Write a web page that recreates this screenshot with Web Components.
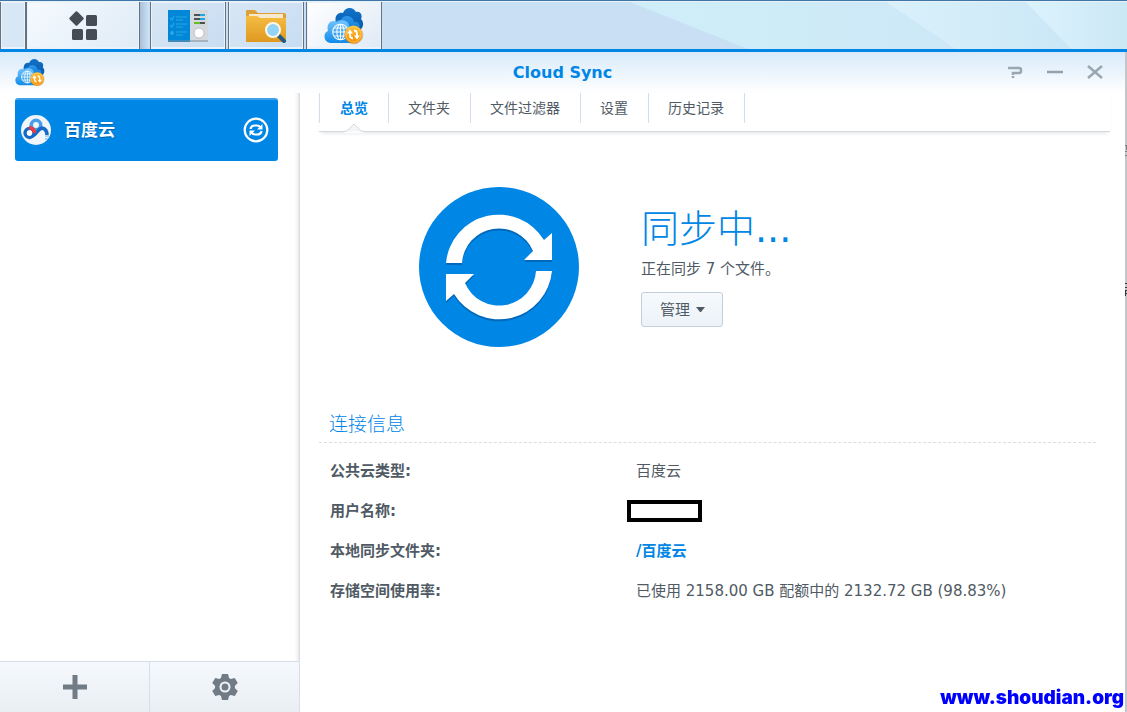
<!DOCTYPE html>
<html lang="zh-CN">
<head>
<meta charset="utf-8">
<title>Cloud Sync</title>
<style>
  html { height: 100%; }
  body {
    margin: 0; min-height: 100%; display: flex; flex-direction: column;
    font: 15px/20px "DejaVu Sans", "Noto Sans CJK SC", sans-serif;
    color: #505a64; background: #fff;
  }
  sync-window { flex: 1; }
</style>
</head>
<body>
<task-bar></task-bar>
<sync-window heading="Cloud Sync">
  <account-list slot="side"></account-list>
  <tab-strip></tab-strip>
  <sync-status></sync-status>
  <connection-info></connection-info>
</sync-window>
<site-mark>www.shoudian.org</site-mark>

<script>
const define = (name, html, setup) => {
  const template = document.createElement('template');
  template.innerHTML = html;
  customElements.define(name, class extends HTMLElement {
    constructor() {
      super();
      this.attachShadow({ mode: 'open' }).append(template.content.cloneNode(true));
    }
    connectedCallback() { if (setup) setup(this, this.shadowRoot); }
  });
};

const ARROW = 'M27 76A53 53 0 0 1 125 53L133 46V73H105L114 64A37 37 0 0 0 43 76Z';
const ARROWS = `<path d="${ARROW}"/><path d="${ARROW}" transform="rotate(180 80 80)"/>`;

define('cloud-icon', `
<style>:host{display:block;width:40px;height:38px} svg{display:block;width:100%;height:100%}</style>
<svg viewBox="0 0 40 38" aria-hidden="true">
  <defs>
    <linearGradient id="b" x2="0" y2="1"><stop stop-color="#1273c8"/><stop offset="1" stop-color="#0453a4"/></linearGradient>
    <linearGradient id="m" x2="0" y2="1"><stop stop-color="#2d94e9"/><stop offset="1" stop-color="#0872cf"/></linearGradient>
    <linearGradient id="f" x2="0" y2="1"><stop stop-color="#72c4ff"/><stop offset="1" stop-color="#128be7"/></linearGradient>
    <linearGradient id="o" x2="0" y2="1"><stop stop-color="#ffc13a"/><stop offset="1" stop-color="#f78b00"/></linearGradient>
  </defs>
  <path fill="url(#b)" d="M12 16C10 9 14 5 19 6C21 0 29-1 32 5C36 4 39 8 37 12C40 15 40 20 36 23L30 28H16Z"/>
  <path fill="url(#m)" d="M9 22C9 15 13 12 17 13C19 7 29 8 30 15C35 14 37 19 35 22L31 31H13Z"/>
  <path fill="url(#f)" d="M6 36C-1 35-1 25 4 24C2 17 7 12 13 15C18 11 26 14 25 20C29 19 33 23 31 27C34 31 31 36 27 36Z"/>
  <g fill="none" stroke="#f4fbff" stroke-width="1.1"><circle cx="16.500" cy="25" r="7.800"/><ellipse cx="16.500" cy="25" rx="3.600" ry="7.800"/><path d="M16.500 17V33M9 25H24M10 21H23M10 29H23"/></g>
  <circle cx="30" cy="28" r="9.300" fill="#9b640a" opacity=".35"/>
  <circle cx="29.500" cy="27.500" r="9" fill="url(#o)"/><circle cx="29.500" cy="27.500" r="7.500" fill="none" stroke="#ffd469" stroke-width=".7"/>
  <path fill="none" stroke="#fff" stroke-width="1.800" d="M29 31.500Q26 31.500 26 28V25M30 23.500Q33 23.500 33 27V30"/><path fill="#fff" d="M23 26.500L26 22.500L29 26.500ZM30 28.500L33 32.500L36 28.500Z"/>
</svg>`);

define('task-button', `
<style>
  :host{display:block;width:76px;flex:none}
  :host([narrow]){width:26px}:host([wide]){width:114px}
  button{display:flex;align-items:center;justify-content:center;width:100%;height:100%;padding:0;background:linear-gradient(135deg,#d8e6f4,#c8ddf2);border:0 solid #66727f;border-width:0 1px;box-shadow:inset 0 0 0 1px #eaf3fb,inset 0 -1px 0 1px #eaf3fb;border-radius:0}
  :host([narrow]) button{background:#d7e7f5}
  :host([wide]) button{background:linear-gradient(135deg,#f5faff,#dfebf6)}
  :host([active]) button{background:linear-gradient(135deg,#fff,#dfeaf6)}
</style>
<button type="button"><slot></slot></button>`, (host, root) => {
  root.querySelector('button').setAttribute('aria-label', host.getAttribute('label'));
});

define('task-bar', `
<style>
  :host{display:block;position:relative;height:47px;padding-top:2px;background:#c9dff4;border-bottom:3px solid #0086e5}
  .sky{position:absolute;inset:0;width:100%;height:100%}
  nav{position:relative;display:flex;height:47px;gap:2px}
  .group{display:flex;padding-right:8px;background:linear-gradient(to left,#c9dff4,#a9bfd6 8px)}
  .icon{display:block}
</style>
<svg class="sky" viewBox="0 0 1127 49" preserveAspectRatio="none" aria-hidden="true">
  <defs>
    <linearGradient id="s1"><stop stop-color="#cfeefa"/><stop offset="1" stop-color="#cce4f4"/></linearGradient>
    <linearGradient id="s2"><stop stop-color="#daf1fb"/><stop offset="1" stop-color="#c6e4f5"/></linearGradient>
    <linearGradient id="s3"><stop stop-color="#dcf3fd"/><stop offset="1" stop-color="#cbe8f5"/></linearGradient>
  </defs>
  <path fill="#c9dff4" d="M0 0H1127V49H0Z"/>
  <path fill="url(#s1)" d="M625 0H1127V49H748Z"/><path fill="url(#s2)" d="M883 0H1127V49H956Z"/><path fill="url(#s3)" d="M1024 0H1127V49H1071Z"/>
  <path fill="#3f76a5" d="M0 0H1127V1H0Z"/><path fill="#e6f2fa" d="M0 1H1127V2H0Z"/>
</svg>
<nav aria-label="任务栏">
  <div class="group">
    <task-button narrow label="显示桌面"></task-button>
    <task-button wide label="主菜单">
      <svg class="icon" width="30" height="30" viewBox="0 0 30 30" fill="#454c56"><rect x="3" y="2" width="11" height="11" rx="1.500" transform="rotate(45 8.500 7.500)"/><rect x="18" y="4" width="11" height="11" rx="1.500"/><rect x="4" y="18" width="11" height="11" rx="1.500"/><rect x="18" y="18" width="11" height="11" rx="1.500"/></svg>
    </task-button>
  </div>
  <task-button label="控制面板">
    <svg class="icon" width="42" height="34" viewBox="0 0 42 34"><path fill="#0087d8" d="M1 1H23V33H1Z"/><path fill="#d3d8dd" d="M23 1H41V33H23Z"/><path d="M1 32H41" stroke="#7b8da0"/><path fill="none" stroke="#2ba6e6" stroke-width="1.200" d="M3 9L5 11L7 7M9 8H20M9 11H16M3 16L5 18L7 14M9 15H20M9 18H16M9 23H20M9 26H16"/><circle cx="5" cy="24" r="2" fill="#2ba6e6"/><path stroke="#4a5057" stroke-width="2" d="M27 6H38M27 10H38M27 14H38"/><path stroke="#19a8e8" stroke-width="2" d="M33 6H38M33 10H38"/><path stroke="#69bd22" stroke-width="2" d="M27 14H33"/><circle cx="32" cy="24" r="5" fill="#fff" stroke="#b9c0c8"/></svg>
  </task-button>
  <task-button label="文件管理">
    <svg class="icon" width="42" height="34" viewBox="0 0 42 34"><defs><linearGradient id="g" x2="0" y2="1"><stop stop-color="#f5bd43"/><stop offset="1" stop-color="#df9820"/></linearGradient></defs><path fill="#dca037" d="M1 2Q1 1 2 1H10L13 4H39Q41 4 41 6V12H1Z"/><path fill="#f7e9cc" d="M4 5H38V11H4Z"/><path fill="url(#g)" d="M1 7H12L15 9H41V31Q41 33 39 33H1Z"/><path stroke="#215a82" stroke-width="4" stroke-linecap="round" d="M33 26L39 32"/><circle cx="28" cy="21" r="7" fill="#91d4f8" stroke="#fff7e5" stroke-width="2"/></svg>
  </task-button>
  <task-button active label="Cloud Sync"><cloud-icon></cloud-icon></task-button>
</nav>`);

define('sync-window', `
<style>
  :host{display:flex;flex-direction:column;position:relative;border-right:2px solid #c3c7ca;background:#fff}
  .behind{position:absolute;left:100%;top:0}
  header{display:grid;grid-template-columns:1fr auto 1fr;align-items:center;height:41px;padding:0 20px;background:linear-gradient(#d8eafa,#fff)}
  cloud-icon{width:30px;height:29px;margin-left:-5px}
  h1{margin:0;font-size:16px;line-height:20px;color:#0086e5}
  .tools{display:flex;justify-content:flex-end;gap:20px}
  .tools button{width:20px;height:20px;padding:0;border:0;background:none}
  svg{display:block}
  .body{flex:1;display:grid;grid-template-columns:300px minmax(0,1fr)}
  main{padding:0 15px 0 19px}
</style>
<header>
  <cloud-icon></cloud-icon><h1></h1>
  <div class="tools">
    <button type="button" aria-label="帮助"><svg width="20" height="20" fill="none" stroke="#9aa6b0" stroke-width="2"><path d="M3 5H14Q16 5 16 7V8Q16 10 14 10H8V12M8 13V15" stroke-width="2.500"/></svg></button>
    <button type="button" aria-label="最小化"><svg width="20" height="20"><path d="M2 9H18" stroke="#95a1ac" stroke-width="2.500"/></svg></button>
    <button type="button" aria-label="关闭"><svg width="20" height="20"><path d="M3 3L17 15M17 3L3 15" stroke="#9aa6b0" stroke-width="2.500"/></svg></button>
  </div>
</header>
<div class="body"><slot name="side"></slot><main><slot></slot></main></div>
<svg class="behind" width="2" height="250" aria-hidden="true"><path stroke="#7d8185" fill="none" d="M0 93.500H2M1.500 93V98M0 99.500H2M0 103.500H2"/><path stroke="#34383c" fill="none" d="M0 231.500H2M0 235.500H2M0 238.500H2M.5 238V244M0 241.500H2"/></svg>`, (host, root) => {
  root.querySelector('h1').textContent = host.getAttribute('heading');
});

define('account-list', `
<style>
  :host{display:flex;flex-direction:column;justify-content:space-between;box-sizing:border-box;border-right:1px solid #d9dde1;box-shadow:inset -4px 0 4px -3px #dcdfe2}
  .item{display:flex;align-items:center;margin:5px 21px 0 15px;height:63px;padding:0 9px 2px 6px;border:0;border-top:2px solid #3da1ec;border-radius:3px;background:#0086e5;color:#fff;font:bold 17px/24px "DejaVu Sans","Noto Sans CJK SC",sans-serif;text-align:left;text-shadow:0 1px 1px #0060b0}
  .item span{flex:1;margin-left:13px}
  footer{display:flex;height:50px;border-top:1px solid #d5dfec}
  footer button{flex:1;display:flex;align-items:center;justify-content:center;padding:0;border:0;background:linear-gradient(#f5f9fd,#e9eef3)}
  footer button+button{border-left:1px solid #d5dfec}
</style>
<button class="item" type="button">
  <svg width="30" height="30" viewBox="0 0 30 30" aria-hidden="true"><circle cx="15" cy="15" r="15" fill="#eff5fb"/><g fill="none" stroke-width="3.500"><circle cx="15" cy="10" r="4.700" stroke="#4a9ee8"/><path stroke="#1469c7" d="M11 21Q14 20 16 17T21 13Q26 14 26 20"/><circle cx="8.500" cy="18" r="4.400" stroke="#1469c7"/><path stroke="#ee3b43" d="M8 12.500Q13 13 13.500 18"/></g><circle cx="8.500" cy="18" r="2.700" fill="#fff"/><path d="M24 21H28M24 24H27" stroke="#6cacf0"/></svg>
  <span>百度云</span>
  <svg width="26" height="26" viewBox="0 0 26 26" aria-hidden="true"><circle cx="13" cy="13" r="11.300" fill="none" stroke="#fff" stroke-width="2.200"/><g fill="none" stroke="#fff" stroke-width="2.200"><path d="M7.500 12Q8 8.500 12 8.500H14Q16 8.500 17.500 10.500M18.500 14Q18 17.500 14 17.500H12Q10 17.500 8.500 15.500"/></g><path fill="#fff" d="M19.500 7V12.500H14ZM6.500 19V13.500H12Z"/></svg>
</button>
<footer>
  <button type="button" aria-label="添加"><svg width="26" height="26"><path d="M13 1V25M1 13H25" stroke="#717b86" stroke-width="5"/></svg></button>
  <button type="button" aria-label="设置"><svg width="26" height="26" viewBox="-13 -13 26 26"><g fill="#717b86"><circle r="10"/><path id="t" d="M-4-9L-3-13H3L4-9V9L3 13H-3L-4 9Z"/><use href="#t" transform="rotate(60)"/><use href="#t" transform="rotate(120)"/></g><circle r="4.500" fill="#717b86" stroke="#f0f4f8" stroke-width="2"/></svg></button>
</footer>`);

define('tab-strip', `
<style>
  :host{display:block;position:relative}
  nav{display:flex;height:38px;align-items:flex-start;border-bottom:1px solid #d5d8da;box-shadow:0 3px 4px -2px #dfe1e3}
  a{padding:0 20px 0 19px;border-right:1px solid #d3deeb;font-size:14px;line-height:30px;color:#505a64;text-decoration:none}
  a:first-child{border-left:1px solid #d3deeb;padding-left:20px}
  a[aria-current]{color:#0086e5;font-weight:bold}
  .notch{position:absolute;left:25px;top:30px}
</style>
<nav aria-label="Cloud Sync"><a href="#overview" aria-current="page">总览</a><a href="#folders">文件夹</a><a href="#filters">文件过滤器</a><a href="#settings">设置</a><a href="#history">历史记录</a></nav>
<svg class="notch" width="20" height="10" aria-hidden="true"><path d="M0 9Q3 9 4 7L10 1L16 7Q17 9 20 9V10H0Z" fill="#fff"/><path d="M0 8.500Q3 8.500 4 7L10 1L16 7Q17 8.500 20 8.500" fill="#f4f5f6" stroke="#d5d8da"/></svg>`);

define('sync-status', `
<style>
  :host{display:flex;align-items:center;gap:62px;padding:55px 0 64px 100px}
  .badge{flex:none;display:block}
  .text{padding-top:2px}
  h2{margin:0 0 10px;font-size:38px;line-height:40px;font-weight:300;color:#0086e5}
  h2 span{font-weight:400}
  p{margin:0 0 13px}
  button{display:flex;align-items:center;gap:6px;height:35px;padding:0 17px 0 18px;border:1px solid #c3cfdd;border-radius:3px;background:linear-gradient(#f6fafd,#ecf2f7);color:#505a64;font:15px/20px "DejaVu Sans","Noto Sans CJK SC",sans-serif}
</style>
<svg class="badge" width="160" height="160" viewBox="0 0 160 160" aria-hidden="true"><circle cx="80" cy="80" r="80" fill="#0086e5"/><g fill="#0068ba" transform="translate(0 2)">${ARROWS}</g><g fill="#fff">${ARROWS}</g></svg>
<div class="text">
  <h2>同步中<span>...</span></h2>
  <p>正在同步 7 个文件。</p>
  <button type="button" aria-haspopup="menu">管理<svg width="9" height="5" aria-hidden="true"><path d="M0 0H9L5 5H4Z" fill="#505a64"/></svg></button>
</div>`);

define('connection-info', `
<style>
  :host{display:block;margin-right:14px}
  h3{margin:0 0 8px;padding:0 0 5px 10px;font-size:19px;line-height:26px;font-weight:300;color:#0086e5;border-bottom:1px dashed #d9dee6}
  dl{margin:0;padding-left:11px;display:grid;grid-template-columns:306px 1fr;line-height:40px}
  dt{font-weight:bold}dd{margin:0}
  a{color:#0086e5;font-weight:bold;text-decoration:none}
  .masked{display:flex;align-items:center;margin-left:-9px}
  .masked span{box-sizing:border-box;width:75px;height:22px;border:4px solid #000}
</style>
<h3>连接信息</h3>
<dl>
  <dt>公共云类型:</dt><dd>百度云</dd>
  <dt>用户名称:</dt><dd class="masked"><span></span></dd>
  <dt>本地同步文件夹:</dt><dd><a href="#folder">/百度云</a></dd>
  <dt>存储空间使用率:</dt><dd>已使用 2158.00 GB 配额中的 2132.72 GB (98.83%)</dd>
</dl>`);

define('site-mark', `
<style>:host{position:fixed;right:3px;bottom:4px;font:900 19px/20px Inter,sans-serif;color:#00f}</style><slot></slot>`);
</script>
</body>
</html>
